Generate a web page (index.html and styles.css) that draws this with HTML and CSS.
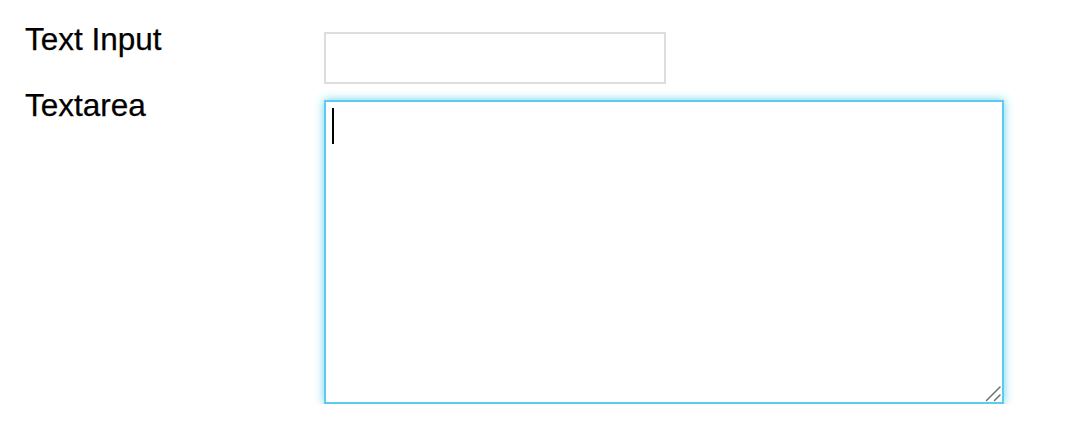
FILE: index.html
```html
<!DOCTYPE html>
<html lang="en">
<head>
<meta charset="utf-8">
<title>Form</title>
<link rel="stylesheet" href="styles.css">
</head>
<body>
<form class="form">
  <div class="row row-input">
    <label class="label" for="ti">Text Input</label>
    <input class="control text-input" id="ti" type="text">
  </div>
  <div class="row row-area">
    <label class="label" for="ta">Textarea</label>
    <div class="area-wrap">
      <textarea class="control textarea is-focused" id="ta"></textarea>
      <span class="caret"></span>
      <svg class="grip" width="20" height="20" viewBox="0 0 20 20" aria-hidden="true">
        <line x1="4.5" y1="18.5" x2="18" y2="5" stroke="#6b6b6b" stroke-width="1.4" stroke-linecap="round"/>
        <line x1="12.5" y1="18.5" x2="18" y2="13" stroke="#6b6b6b" stroke-width="1.4" stroke-linecap="round"/>
      </svg>
    </div>
  </div>
</form>
</body>
</html>
```
FILE: styles.css
```css
html, body {
  margin: 0;
  padding: 0;
  background: #ffffff;
}

body {
  font-family: "Liberation Sans", Arial, Helvetica, sans-serif;
  color: #000000;
}

.form {
  display: flex;
  flex-direction: column;
  gap: 4px;
  padding: 22px 0 0 25px;
}

.row {
  display: flex;
  align-items: flex-start;
}

.label {
  width: 299px;
  flex: none;
  font-size: 31.5px;
  line-height: 34px;
  -webkit-text-stroke: 0.25px #000000;
}

.control {
  box-sizing: border-box;
  margin: 0;
  font-family: "Liberation Sans", Arial, Helvetica, sans-serif;
  font-size: 30px;
  background: #ffffff;
  outline: none;
}

.text-input {
  margin-top: 10px;
  width: 342px;
  height: 52px;
  border: 2px solid #dddddd;
  padding: 4px 6px;
}

.area-wrap {
  position: relative;
  margin-top: 12px;
  width: 680px;
  height: 304px;
}

.textarea {
  display: block;
  width: 680px;
  height: 304px;
  border: 2px solid #5bcbee;
  padding: 6px;
  box-shadow: 0 0 9px rgba(91, 203, 238, 0.9);
  resize: none;
}

.caret {
  position: absolute;
  left: 8px;
  top: 8px;
  width: 2px;
  height: 36px;
  background: #000000;
}

.grip {
  position: absolute;
  right: 2px;
  bottom: 2px;
}
```
